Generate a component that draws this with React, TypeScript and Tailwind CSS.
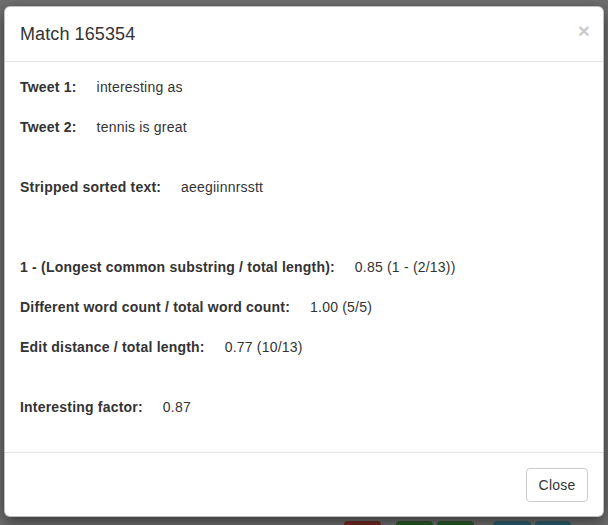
import React from "react";

const rows: { label: string; value: string; mb: string }[] = [
  { label: "Tweet 1:", value: "interesting as", mb: "mb-5" },
  { label: "Tweet 2:", value: "tennis is great", mb: "mb-10" },
  { label: "Stripped sorted text:", value: "aeegiinnrsstt", mb: "mb-[60px]" },
  { label: "1 - (Longest common substring / total length):", value: "0.85 (1 - (2/13))", mb: "mb-5" },
  { label: "Different word count / total word count:", value: "1.00 (5/5)", mb: "mb-5" },
  { label: "Edit distance / total length:", value: "0.77 (10/13)", mb: "mb-10" },
  { label: "Interesting factor:", value: "0.87", mb: "mb-5" },
];

export default function App() {
  return (
    <div
      className="relative w-[608px] h-[525px] overflow-hidden bg-[#6f6f6f] pt-[6px] pl-[4px]"
      style={{ fontFamily: '"Liberation Sans", Arial, sans-serif' }}
    >
      <div className="absolute left-[344px] top-[521px] flex">
        <div className="w-[37px] h-[20px] rounded-[4px] bg-[#742826]" />
        <div className="ml-[15px] w-[37px] h-[20px] rounded-[4px] bg-[#2c5a2c]" />
        <div className="ml-[4px] w-[37px] h-[20px] rounded-[4px] bg-[#2c5a2c]" />
        <div className="ml-[19px] w-[38px] h-[20px] rounded-[4px] bg-[#2c5f6d]" />
        <div className="ml-[4px] w-[36px] h-[20px] rounded-[4px] bg-[#2c5f6d]" />
      </div>
      <div className="relative w-[600px] bg-white border border-[rgba(0,0,0,0.25)] rounded-[6px] shadow-[0_5px_15px_rgba(0,0,0,0.5)] text-[#333] text-[14px]">
        <div className="h-[55px] px-[15px] flex items-center justify-between border-b border-[#e5e5e5]">
          <h4 className="text-[18px] leading-[26px] font-normal -mt-[1px] tracking-[0.1px]">Match 165354</h4>
          <span className="text-[21px] font-bold leading-none text-black opacity-20 -mt-[7px] -mr-[2px]">×</span>
        </div>
        <div className="p-[15px] tracking-[0.2px]">
          {rows.map((r) => (
            <div key={r.label} className={`flex h-5 leading-5 ${r.mb}`}>
              <span className="font-bold">{r.label}</span>
              <span className="ml-5">{r.value}</span>
            </div>
          ))}
        </div>
        <div className="border-t border-[#e5e5e5] pt-[15px] pb-[14px] px-[15px] flex justify-end">
          <button className="h-[34px] w-[62px] border border-[#ccc] rounded-[4px] bg-white text-[14px] leading-5 text-[#333] tracking-[0.2px]">
            Close
          </button>
        </div>
      </div>
    </div>
  );
}
